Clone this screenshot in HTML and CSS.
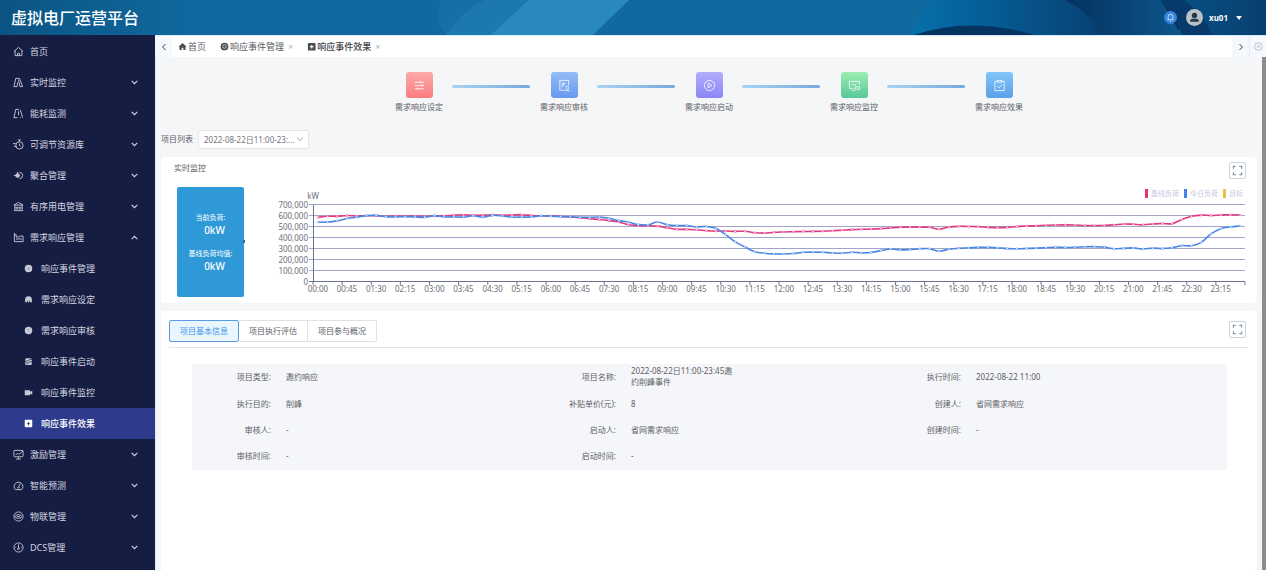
FILE: index.html
```html
<!DOCTYPE html>
<html lang="zh-CN">
<head>
<meta charset="utf-8">
<title>虚拟电厂运营平台</title>
<link rel="stylesheet" href="styles.css">
</head>
<body>
<header class="header">
  <svg class="header-art" viewBox="0 0 1266 35" preserveAspectRatio="none" aria-hidden="true">
    <defs>
      <linearGradient id="hLeft"><stop offset="0" stop-color="#0b5484"/><stop offset="1" stop-color="#10699f"/></linearGradient>
      <linearGradient id="hRing"><stop offset="0" stop-color="#0670aa"/><stop offset=".35" stop-color="#07568e"/><stop offset=".75" stop-color="#073a6c"/><stop offset="1" stop-color="#05305f"/></linearGradient>
      <linearGradient id="hRight"><stop offset="0" stop-color="#05325f"/><stop offset="1" stop-color="#0b568c"/></linearGradient>
      <linearGradient id="hEnd"><stop offset="0" stop-color="#07548a"/><stop offset="1" stop-color="#083f6e"/></linearGradient>
    </defs>
    <rect width="1266" height="35" fill="#10699f"/>
    <rect width="200" height="35" fill="url(#hLeft)"/>
    <path d="M441 0H526L494 35H446Q432 18 441 0Z" fill="#176fa5"/>
    <path d="M485 0H527L492 35H445Q470 5 485 0Z" fill="#1d78ae"/>
    <path d="M528 0H629L593 35H491Z" fill="#2989bf"/>
    <path d="M934 0H1200L1176 35H912Q918 15 934 0Z" fill="url(#hRing)"/>
    <path d="M1065 0H1161L1181 35H1100Q1093 14 1065 0Z" fill="url(#hRight)"/>
    <path d="M914 35Q970 16 1035 35Z" fill="#063461"/>
    <path d="M1160 0H1266V35H1181Q1178 14 1160 0Z" fill="url(#hEnd)"/>
    <path d="M1160 0H1184Q1206 16 1212 35H1181Q1178 14 1160 0Z" fill="#073a6a"/>
  </svg>
  <h1 class="brand">虚拟电厂运营平台</h1>
  <div class="header-tools">
    <button class="bell" aria-label="通知"><svg viewBox="0 0 14 14"><path d="M4.500 9.500V6a2.500 2.500 0 0 1 5 0v3.500M3.800 9.500h6.400M6.300 11h1.400" fill="none" stroke="#d8ecff" stroke-width=".9"/></svg></button>
    <button class="user">
      <svg class="avatar" viewBox="0 0 18 18"><circle cx="9" cy="9" r="9" fill="#b9c0c6"/><circle cx="9" cy="6.800" r="2.800" fill="#24384a"/><path d="M4.300 13.500q0-3.300 3-3.300h3.400q3 0 3 3.300z" fill="#24384a"/></svg>
      <span>xu01</span>
      <svg class="caret" viewBox="0 0 6 4"><path d="M0 0h6L3 4z" fill="#fff"/></svg>
    </button>
  </div>
</header>

<div class="shell">
  <nav class="sidebar" aria-label="主导航">
    <a class="item" href="#"><svg class="ico" viewBox="0 0 12 12"><path d="M1 6 6 1.500 11 6M2.300 5v5.500h7.400V5M5 10.500V8h2v2.500"/></svg><span>首页</span></a>
    <a class="item" href="#"><svg class="ico" viewBox="0 0 12 12"><path d="M1 10.500 3 1.500h4l3.500 9H7.500L6 3M1 10.500h3.500L5 6"/></svg><span>实时监控</span><svg class="arrow" viewBox="0 0 8 8"><path d="m1.500 2.500 2.500 2.500 2.500-2.500"/></svg></a>
    <a class="item" href="#"><svg class="ico" viewBox="0 0 12 12"><path d="M1 10.500 3 1.500h3.500M1 10.500h4M6 3.500v4.500M8 2l2.500 8.500M7.500 10.500h1"/></svg><span>能耗监测</span><svg class="arrow" viewBox="0 0 8 8"><path d="m1.500 2.500 2.500 2.500 2.500-2.500"/></svg></a>
    <a class="item" href="#"><svg class="ico" viewBox="0 0 12 12"><circle cx="7" cy="7" r="4"/><path d="M7 3V1M5.500 1h3M7 5v2l1.500 1M0 5h3M1 8h3"/></svg><span>可调节资源库</span><svg class="arrow" viewBox="0 0 8 8"><path d="m1.500 2.500 2.500 2.500 2.500-2.500"/></svg></a>
    <a class="item" href="#"><svg class="ico" viewBox="0 0 12 12"><circle class="solid" cx="5" cy="6" r="2.500"/><path d="M7 2.500a3.500 3.500 0 1 1 0 7M1 6h2M5 2v2"/></svg><span>聚合管理</span><svg class="arrow" viewBox="0 0 8 8"><path d="m1.500 2.500 2.500 2.500 2.500-2.500"/></svg></a>
    <a class="item" href="#"><svg class="ico" viewBox="0 0 12 12"><path d="M1 4.500 6 1.500l5 3zM2 4.500v6M10 4.500v6M1 10.500h10M4.500 6v4M7.500 6v4M2 7.500h8"/></svg><span>有序用电管理</span><svg class="arrow" viewBox="0 0 8 8"><path d="m1.500 2.500 2.500 2.500 2.500-2.500"/></svg></a>
    <a class="item" href="#" aria-expanded="true"><svg class="ico" viewBox="0 0 12 12"><path d="M1.500 1v9.500H11V4.500H7.500L6 5.500H3.500V3H1.500M4 8.500V7.500h5v1"/></svg><span>需求响应管理</span><svg class="arrow" viewBox="0 0 8 8"><path d="m1.500 5.500 2.500-2.500 2.500 2.500"/></svg></a>
    <a class="item sub" href="#"><svg class="ico" viewBox="0 0 12 12"><circle class="solid" cx="6" cy="6" r="5"/><path class="cut faint" d="M4.500 6h3M6 4.500v3"/></svg><span>响应事件管理</span></a>
    <a class="item sub" href="#"><svg class="ico" viewBox="0 0 12 12"><path class="solid" d="M1.500 9.500V6a4.500 4.500 0 0 1 9 0v3.500H8V7.500H7v2H5v-2H4v2z"/></svg><span>需求响应设定</span></a>
    <a class="item sub" href="#"><svg class="ico" viewBox="0 0 12 12"><circle class="solid" cx="6" cy="6" r="5"/><path class="cut faint" d="M6 3.500V6l1.500 1.500"/></svg><span>需求响应审核</span></a>
    <a class="item sub" href="#"><svg class="ico" viewBox="0 0 12 12"><rect class="solid" x="1.500" y="1.500" width="9" height="9" rx="2"/><path class="cut" d="M1 5.500h4L7 3.500h4M2 8h4l2-1.500h3"/></svg><span>响应事件启动</span></a>
    <a class="item sub" href="#"><svg class="ico" viewBox="0 0 12 12"><path class="solid" d="M1 3h7v2l3-1.500v5.500L8 7.500V9.500H1z"/></svg><span>响应事件监控</span></a>
    <a class="item sub active" href="#" aria-current="page"><svg class="ico" viewBox="0 0 12 12"><rect class="solid" x="1" y="1" width="10" height="10" rx="1"/><path class="cut" d="M4 6.200h4M6 4.200v4"/></svg><span>响应事件效果</span></a>
    <a class="item" href="#"><svg class="ico" viewBox="0 0 12 12"><rect x="1" y="1.500" width="10" height="7" rx="1"/><path d="m3 6.500 2-2 1.500 1.500L11 2M6 8.500v2.500M3.500 11h5"/></svg><span>激励管理</span><svg class="arrow" viewBox="0 0 8 8"><path d="m1.500 2.500 2.500 2.500 2.500-2.500"/></svg></a>
    <a class="item" href="#"><svg class="ico" viewBox="0 0 12 12"><path d="M2.500 10.500a4.800 4.800 0 1 1 7 0zM6 7.500l2-3.500M4.500 8.500h3"/></svg><span>智能预测</span><svg class="arrow" viewBox="0 0 8 8"><path d="m1.500 2.500 2.500 2.500 2.500-2.500"/></svg></a>
    <a class="item" href="#"><svg class="ico" viewBox="0 0 12 12"><circle cx="6" cy="6" r="5"/><ellipse cx="6" cy="6" rx="3.500" ry="2"/><path d="M4.500 6h3"/></svg><span>物联管理</span><svg class="arrow" viewBox="0 0 8 8"><path d="m1.500 2.500 2.500 2.500 2.500-2.500"/></svg></a>
    <a class="item" href="#"><svg class="ico" viewBox="0 0 12 12"><circle cx="6" cy="6" r="5"/><path d="M6 2.500v4M6 6.500l-1.200 1.200h2.400zM2.500 6h1M8.500 6h1"/></svg><span>DCS管理</span><svg class="arrow" viewBox="0 0 8 8"><path d="m1.500 2.500 2.500 2.500 2.500-2.500"/></svg></a>
  </nav>

  <main class="main">
    <div class="tabbar">
      <button class="scroll-btn" aria-label="向左"><svg viewBox="0 0 8 8"><path d="M5.500 1 2.500 4l3 3"/></svg></button>
      <div class="tabs">
        <a class="tab" href="#"><svg class="tab-ico" viewBox="0 0 10 10"><path d="M5 1 .5 5.200h1.200V9h2.400V6.500h1.800V9h2.400V5.200h1.200z"/></svg>首页</a>
        <a class="tab" href="#"><svg class="tab-ico" viewBox="0 0 10 10"><circle cx="5" cy="5" r="4.300"/><circle cx="5" cy="5" r="2" fill="none" stroke="#c8cbd0"/></svg>响应事件管理<span class="close">×</span></a>
        <a class="tab current" href="#"><svg class="tab-ico" viewBox="0 0 10 10"><rect x="1" y="1" width="8.500" height="8.500" rx="1"/><path d="M5.200 3.200v4M3.200 5.200h4" stroke="#fff" stroke-width="1.300"/></svg>响应事件效果<span class="close">×</span></a>
      </div>
      <button class="scroll-btn" aria-label="向右"><svg viewBox="0 0 8 8"><path d="m2.500 1 3 3-3 3"/></svg></button>
      <button class="scroll-btn close-all" aria-label="关闭全部"><svg viewBox="0 0 10 10"><circle cx="5" cy="5" r="4.200"/><path d="m3.400 3.400 3.200 3.200M6.600 3.400 3.400 6.600"/></svg></button>
    </div>

    <div class="content">
      <div class="page">
        <ol class="steps">
          <li class="step"><span class="tile red"><svg viewBox="0 0 14 14"><path d="M2 3.500h10M2 7h10M2 10.500h10M8 2.300v2.400M10 5.800v2.400M5 9.300v2.400"/></svg></span>需求响应设定</li>
          <li class="link" aria-hidden="true"></li>
          <li class="step"><span class="tile blue"><svg viewBox="0 0 14 14"><path d="M7.500 12H2V1.500h9.500V7M4.500 5v4M4.500 4l2 3V3.500"/><circle cx="10" cy="9.500" r="1.600"/><path d="M8 12.500h4.500"/></svg></span>需求响应审核</li>
          <li class="link" aria-hidden="true"></li>
          <li class="step"><span class="tile violet"><svg viewBox="0 0 14 14"><circle cx="7" cy="7" r="5.500"/><path d="M5.500 4.500v5L9.500 7z"/></svg></span>需求响应启动</li>
          <li class="link" aria-hidden="true"></li>
          <li class="step"><span class="tile green"><svg viewBox="0 0 14 14"><path d="M6 10H1.500V2.500h11V6M4 7l2-1.500L7.500 7 9 5M4 12h4M8 8.500h4.500V11H8z"/></svg></span>需求响应监控</li>
          <li class="link" aria-hidden="true"></li>
          <li class="step"><span class="tile sky"><svg viewBox="0 0 14 14"><path d="M4.500 2.500H2V12.500h10v-10H9.500M4.500 1.500h5v2h-5zM4.500 7.500l2 2 3-3.500"/></svg></span>需求响应效果</li>
        </ol>

        <div class="filter">
          <label for="project">项目列表</label>
          <span class="select-wrap">
            <select id="project"><option>2022-08-22日11:00-23:...</option></select>
            <svg class="select-arrow" viewBox="0 0 8 8"><path d="m1 2.500 3 3 3-3"/></svg>
          </span>
        </div>

        <section class="card">
          <div class="card-head">
            <h2>实时监控</h2>
            <button class="expand" aria-label="全屏"><svg viewBox="0 0 12 12"><path d="M4 1.500H1.500V4M8 1.500h2.500V4M4 10.500H1.500V8M8 10.500h2.500V8"/></svg></button>
          </div>
          <div class="monitor">
            <dl class="load">
              <dt>当前负荷:</dt><dd>0kW</dd>
              <dt>基线负荷均值:</dt><dd>0kW</dd>
            </dl>
            <div class="chart-box">
              <ul class="legend">
                <li class="k-base">基线负荷</li><li class="k-today">今日负荷</li><li class="k-goal">目标</li>
              </ul>
              <svg class="chart" id="chart" viewBox="0 0 980 110" role="img" aria-label="负荷曲线"></svg>
            </div>
          </div>
        </section>

        <section class="card info">
          <div class="info-head">
            <div class="seg">
              <button class="seg-btn on">项目基本信息</button><button class="seg-btn">项目执行评估</button><button class="seg-btn">项目参与概况</button>
            </div>
            <button class="expand" aria-label="全屏"><svg viewBox="0 0 12 12"><path d="M4 1.500H1.500V4M8 1.500h2.500V4M4 10.500H1.500V8M8 10.500h2.500V8"/></svg></button>
          </div>
          <dl class="details">
            <div><dt>项目类型:</dt><dd>邀约响应</dd></div>
            <div><dt>项目名称:</dt><dd>2022-08-22日11:00-23:45邀约削峰事件</dd></div>
            <div><dt>执行时间:</dt><dd>2022-08-22 11:00</dd></div>
            <div><dt>执行目的:</dt><dd>削峰</dd></div>
            <div><dt>补贴单价(元):</dt><dd>8</dd></div>
            <div><dt>创建人:</dt><dd>省网需求响应</dd></div>
            <div><dt>审核人:</dt><dd>-</dd></div>
            <div><dt>启动人:</dt><dd>省网需求响应</dd></div>
            <div><dt>创建时间:</dt><dd>-</dd></div>
            <div><dt>审核时间:</dt><dd>-</dd></div>
            <div><dt>启动时间:</dt><dd>-</dd></div>
          </dl>
        </section>
      </div>
      <div class="scrollbar" aria-hidden="true"></div>
    </div>
  </main>
</div>
<script src="chart.js"></script>
</body>
</html>
```

FILE: styles.css
```css
* { box-sizing: border-box; }
html, body { height: 100%; }
body {
  margin: 0;
  display: flex;
  flex-direction: column;
  overflow: hidden;
  font: 8px/11px "Noto Sans", "Noto Sans CJK SC", sans-serif;
  color: #5d6066;
  background: #f5f6f8;
}
h1, h2, ol, ul, dl, dd { margin: 0; padding: 0; font-weight: 400; }
ol, ul { list-style: none; }
a { color: inherit; text-decoration: none; }
button { font: inherit; color: inherit; padding: 0; border: 0; background: none; }
svg { display: block; }

.header {
  position: relative;
  flex: none;
  display: flex;
  align-items: center;
  justify-content: space-between;
  height: 35px;
  padding: 0 24px 0 11px;
  color: #fff;
  background: #10699f;
}
.header-art { position: absolute; inset: 0; width: 100%; height: 100%; }
.brand { position: relative; font-size: 16px; line-height: 24px; font-weight: 500; }
.header-tools { position: relative; display: flex; align-items: center; gap: 9px; }
.bell { width: 13px; height: 13px; border-radius: 50%; background: #3585dc; }
.user { display: flex; align-items: center; gap: 6px; font-size: 8px; font-weight: 700; }
.avatar { width: 17px; height: 17px; }
.caret { width: 6px; height: 4px; margin-left: 2px; }

.shell { flex: 1; display: flex; min-height: 0; }

.sidebar {
  flex: none;
  width: 155px;
  padding-top: 1px;
  overflow: hidden;
  background: #161d42;
  color: #d3d6e0;
  font-size: 9px;
}
.item { display: flex; align-items: center; height: 31px; padding: 0 16px 0 13px; }
.item span { flex: 1; margin-left: 6px; }
.ico { width: 11px; height: 11px; fill: none; stroke: #c5c9d6; stroke-width: 1; }
.ico .solid { fill: #c5c9d6; stroke: none; }
.ico .cut { stroke: #161d42; }
.ico .faint { stroke: #8b90a8; }
.arrow { width: 9px; height: 9px; fill: none; stroke: #d3d6e0; stroke-width: 1; }
.sub { padding-left: 24px; }
.sub .ico { width: 9px; height: 9px; }
.sub span { margin-left: 8px; }
.active { background: #2e3b8c; color: #fff; font-weight: 500; }
.active .ico .solid { fill: #fff; }

.main { flex: 1; min-width: 0; display: flex; flex-direction: column; }
.tabbar { flex: none; display: flex; height: 22px; background: #fff; border-top: 1px solid #d5eafa; font-size: 9px; }
.scroll-btn { display: flex; align-items: center; justify-content: center; width: 17px; background: #f5f8fd; }
.scroll-btn svg { width: 8px; height: 8px; fill: none; stroke: #3c4250; stroke-width: 1; }
.close-all { border-left: 1px solid #e6eaf2; }
.close-all svg { width: 9px; height: 9px; stroke: #a9adb6; stroke-width: .8; }
.tabs { flex: 1; display: flex; align-items: center; gap: 14px; padding-left: 6px; color: #5a5d63; }
.tab { display: flex; align-items: center; gap: 1px; }
.tab-ico { width: 9px; height: 9px; fill: #4a4d53; }
.close { margin-left: 3px; color: #b0b3b9; font-weight: 400; }
.current { font-weight: 500; color: #404349; }

.content { flex: 1; min-height: 0; display: flex; }
.scrollbar { width: 4px; background: #8c8c8c; }
.page { flex: 1; min-width: 0; display: flex; flex-direction: column; padding: 15px 5px 0; border-left: 1px solid #dfe6fa; }

.steps { display: flex; justify-content: center; align-items: flex-start; }
.step { display: flex; flex-direction: column; align-items: center; gap: 3px; width: 50px; white-space: nowrap; }
.tile { display: flex; align-items: center; justify-content: center; width: 27px; height: 26px; border-radius: 3px; }
.tile svg { width: 13px; height: 13px; fill: none; stroke: #fff; stroke-opacity: .85; stroke-width: 1; }
.red { background: linear-gradient(#ffaaa9, #fb7d80); }
.blue { background: linear-gradient(#94bdf9, #6699ee); }
.violet { background: linear-gradient(#b1aefb, #8c86f8); }
.green { background: linear-gradient(#9deeb0, #55c898); }
.sky { background: linear-gradient(#83c5f9, #5aa0ea); }
.link { flex: none; width: 78px; height: 3px; margin: 13px 9px 0 8px; border-radius: 2px; background: linear-gradient(90deg, #a9d3f2, #76aadd); }

.filter { display: flex; align-items: flex-start; gap: 5px; margin-top: 18px; }
.filter label { line-height: 17px; }
.select-wrap { position: relative; }
.select-wrap select {
  appearance: none;
  width: 111px;
  height: 19px;
  padding: 0 8px 0 5px;
  border: 1px solid #e3e5ea;
  border-radius: 2px;
  background: #fff;
  color: #72757b;
  font: inherit;
  display: block;
}
.select-arrow { position: absolute; right: 5px; top: 5px; width: 8px; height: 8px; fill: none; stroke: #909399; stroke-width: .9; }

.card { background: #fff; border-radius: 3px; margin-top: 8px; }
.card-head { display: flex; justify-content: space-between; align-items: flex-start; padding: 5px 11px 0 13px; }
.card-head h2 { font-size: 8px; line-height: 12px; }
.expand { display: flex; align-items: center; justify-content: center; width: 17px; height: 17px; border: 1px solid #ccd3dd; border-radius: 2px; }
.expand svg { width: 11px; height: 11px; fill: none; stroke: #8298b0; stroke-width: 1.3; }
.monitor { display: flex; align-items: flex-start; gap: 26px; padding: 8px 7px 6px 16px; }
.load {
  position: relative;
  flex: none;
  display: flex;
  flex-direction: column;
  align-self: stretch;
  justify-content: center;
  width: 67px;
  border-radius: 2px;
  background: #2f99d8;
  color: #fff;
  text-align: center;
}
.load::after { content: ""; position: absolute; right: -1px; top: 53px; width: 2px; height: 3px; background: #2271b0; }
.load dt { font-size: 7px; }
.load dd { margin: 1px 0 12px; padding-left: 8px; font-size: 10px; line-height: 12px; font-weight: 500; }
.load dd:last-child { margin-bottom: 0; }
.chart-box { position: relative; flex: 1; min-width: 0; }
.chart { width: 100%; height: auto; overflow: visible; }
.chart text { font-size: 8px; fill: #6e7079; }
.legend { position: absolute; right: 7px; top: 1px; display: flex; gap: 5px; font-size: 7px; color: #c6c8e2; }
.legend li { display: flex; align-items: center; gap: 3px; }
.legend li::before { content: ""; width: 3px; height: 9px; background: currentColor; }
.k-base::before { color: #e62e7b; }
.k-today::before { color: #4582ea; }
.k-goal::before { color: #e6bf45; }

.info { flex: 1; padding: 9px 9px 0 8px; }
.info-head { display: flex; justify-content: space-between; align-items: flex-start; padding: 0 2px 5px 0; border-bottom: 1px solid #e3e4e8; }
.info-head .expand { margin-top: 1px; }
.seg { display: flex; }
.seg-btn { width: 69px; height: 22px; padding-bottom: 2px; border: 1px solid #dfe1e6; border-left-width: 0; background: #fff; }
.seg-btn:last-child { border-radius: 0 2px 2px 0; }
.seg-btn.on { width: 70px; border: 1px solid #5b9ce0; border-radius: 2px; background: #e9f5ff; color: #3f94ec; }
.details {
  display: grid;
  grid-template-columns: repeat(3, 1fr);
  margin: 16px 21px 0 23px;
  background: #f5f6fa;
}
.details div { display: grid; grid-template-columns: 79px 108px; column-gap: 15px; align-items: center; min-height: 26px; padding: 1px 0 5px; }
.details dt { text-align: right; }
```

FILE: chart.js
```javascript
(() => {
const base = [587,598,597,605,600,602,603,598,599,600,599,597,600,602,607,611,607,608,609,607,609,612,605,602,601,597,590,585,575,568,558,545,520,514,512,508,493,480,478,475,466,462,464,460,461,448,444,452,455,457,459,460,462,466,471,476,479,481,485,492,498,499,498,498,480,500,506,505,503,497,494,496,505,509,512,516,518,519,518,514,513,514,519,527,525,521,527,532,530,568,597,608,605,609,612,608];
const today = [544,544,556,578,588,603,606,594,592,594,592,588,603,592,592,590,602,590,606,600,590,590,592,602,598,596,592,588,588,590,580,558,545,522,520,545,520,513,513,500,505,488,430,365,318,275,262,256,255,259,270,272,270,264,262,270,265,268,285,300,292,295,302,303,280,298,307,310,315,315,312,303,302,305,308,312,316,314,316,320,321,317,302,306,310,300,308,304,312,331,330,360,437,485,500,510];

const left = 43, right = 975, top = 18, bottom = 95;
const slot = (right - left) / 96;
const xAt = i => left + slot * (i + 0.5);
const yAt = v => bottom - (bottom - top) * v / 700;
const parts = [];

for (let v = 0; v <= 700; v += 100) {
  const y = Math.round(yAt(v)) - 0.5;
  parts.push(`<path d="M${left - 4} ${y}H${right}" stroke="${v ? '#a3a5c6' : '#6e7094'}" stroke-width="1"/>`);
  parts.push(`<text x="${left - 5}" y="${y + 3}" text-anchor="end">${v ? v + ',000' : '0'}</text>`);
}
parts.push(`<path d="M${left}.5 ${top}V${bottom}" stroke="#6e7094"/>`);
parts.push(`<text x="${left}" y="12" text-anchor="middle">kW</text>`);

for (let i = 0; i <= 96; i += 3) {
  const x = left + slot * i;
  parts.push(`<path d="M${x} ${bottom}v3" stroke="#6e7094"/>`);
  if (i < 96) {
    const h = String(Math.floor(i / 4)).padStart(2, '0');
    const m = String(i % 4 * 15).padStart(2, '0');
    parts.push(`<text x="${xAt(i)}" y="105" text-anchor="middle">${h}:${m}</text>`);
  }
}

function series(values, color) {
  const p = values.map((v, i) => [xAt(i), yAt(v)]);
  let d = `M${p[0]}`;
  for (let i = 1; i < p.length; i++) {
    const a = p[Math.max(i - 2, 0)], b = p[i - 1], c = p[i], e = p[Math.min(i + 1, p.length - 1)];
    d += `C${b[0] + (c[0] - a[0]) / 6} ${b[1] + (c[1] - a[1]) / 6} ${c[0] - (e[0] - b[0]) / 6} ${c[1] - (e[1] - b[1]) / 6} ${c}`;
  }
  parts.push(`<path d="${d}" fill="none" stroke="${color}" stroke-width="1.6"/>`);
  p.forEach(q => parts.push(`<circle cx="${q[0]}" cy="${q[1]}" r="1" fill="#fff" stroke="${color}" stroke-width=".4"/>`));
}
series(base, '#e23a80');
series(today, '#4a86e4');

document.getElementById('chart').innerHTML = parts.join('');
})();
```
